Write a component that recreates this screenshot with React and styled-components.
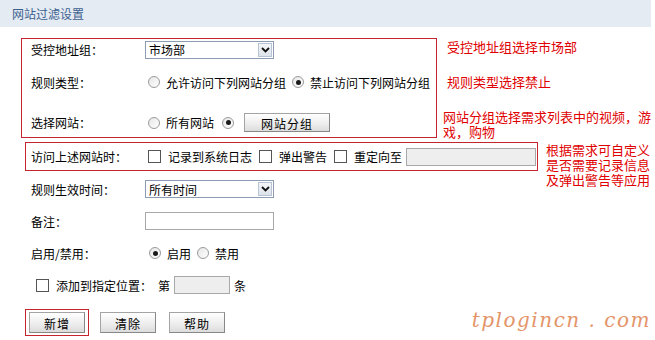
import React from 'react';
import styled, { createGlobalStyle } from 'styled-components';

const Global = createGlobalStyle`
  html, body { margin: 0; padding: 0; background: #fff; }
  body {
    font-family: "Noto Sans CJK SC", "Noto Sans", sans-serif;
    font-size: 12px;
    color: #000;
  }
`;

const Page = styled.div`
  position: relative;
  width: 655px;
  height: 340px;
  overflow: hidden;
`;

const Header = styled.div`
  width: 639px;
  height: 27px;
  padding-left: 12px;
  background: #e4ebf3;
  line-height: 27px;
  font-size: 12px;
  color: #3d5f8f;
`;

const Content = styled.div`
  padding: 11px 0 0 21px;
`;

const Section = styled.div`
  display: flex;
  align-items: flex-start;
  height: ${p => p.$h}px;
  margin-top: ${p => p.$mt || 0}px;
`;

const RedBox = styled.div`
  box-sizing: border-box;
  border: 1px solid #c4262e;
  width: ${p => p.$w}px;
  height: ${p => p.$h}px;
  margin-left: ${p => p.$ml || 0}px;
  padding-left: ${p => p.$pl || 0}px;
  flex-shrink: 0;
`;

const Row = styled.div`
  display: flex;
  align-items: center;
  height: ${p => p.$h}px;
  padding-top: ${p => p.$pt || 0}px;
  box-sizing: border-box;
  padding-left: ${p => p.$pl || 0}px;
  margin-top: ${p => p.$mt || 0}px;
  white-space: nowrap;
`;

const Label = styled.div`
  width: ${p => p.$w || 114}px;
  flex-shrink: 0;
`;

const Controls = styled.div`
  display: flex;
  align-items: center;
`;

const Text = styled.span`
  margin-left: ${p => p.$ml || 0}px;
`;

const Radio = styled.span`
  box-sizing: border-box;
  width: 12px;
  height: 12px;
  border-radius: 50%;
  border: 1px solid #9a9a9a;
  background: linear-gradient(135deg, #e6e6e6, #fff);
  margin: 0 6px 0 ${p => p.$ml ?? 6}px;
  display: inline-flex;
  align-items: center;
  justify-content: center;
  flex-shrink: 0;
  &::after {
    content: "";
    display: ${p => (p.$on ? 'block' : 'none')};
    width: 5px;
    height: 5px;
    border-radius: 50%;
    background: #1a1a1a;
  }
`;

const Check = styled.span`
  box-sizing: border-box;
  width: 13px;
  height: 13px;
  border: 1px solid #555;
  background: #fff;
  margin: 0 7px 0 ${p => p.$ml ?? 7}px;
  flex-shrink: 0;
`;

const SelectBox = styled.div`
  box-sizing: border-box;
  width: 129px;
  height: 18px;
  border: 1px solid #8c9db3;
  display: flex;
  align-items: center;
  justify-content: space-between;
  padding: 0 1px 0 3px;
  background: #fff;
`;

const SelectArrow = styled.span`
  box-sizing: border-box;
  width: 14px;
  height: 14px;
  border: 1px solid #b8c4d4;
  background: linear-gradient(#f4f6f9, #dde3ea);
  display: flex;
  align-items: center;
  justify-content: center;
`;

const TextInput = styled.div`
  box-sizing: border-box;
  width: ${p => p.$w}px;
  height: 18px;
  margin-left: ${p => p.$ml || 0}px;
  margin-right: ${p => p.$mr || 0}px;
  border: 1px solid #a8a8a8;
  background: ${p => (p.$gray ? '#eeeeee' : '#fff')};
`;

const Button = styled.div`
  box-sizing: border-box;
  width: ${p => p.$w || 56}px;
  height: ${p => p.$h || 21}px;
  margin-left: ${p => p.$ml || 0}px;
  border: 1px solid #a4a4a4;
  border-right-color: #888;
  border-bottom-color: #888;
  background: linear-gradient(#ffffff, #ececec 60%, #dcdcdc);
  display: flex;
  align-items: center;
  justify-content: center;
  padding-top: 1px;
  font-size: 12px;
  color: #000;
  letter-spacing: 1px;
`;

const ButtonRow = styled.div`
  display: flex;
  align-items: center;
  margin-top: 8px;
  margin-left: 4px;
`;

const Highlight = styled.div`
  box-sizing: border-box;
  border: 1px solid #c4262e;
  padding: 2px 3px;
`;

const Notes = styled.div`
  display: flex;
  flex-direction: column;
  margin-left: ${p => p.$ml || 0}px;
  color: #e00000;
  font-size: 13px;
`;

const Note = styled.div`
  margin-top: ${p => p.$mt || 0}px;
  margin-left: ${p => p.$ml || 0}px;
  line-height: ${p => p.$lh || 16}px;
  width: ${p => p.$w || 220}px;
  white-space: ${p => (p.$wrap ? 'normal' : 'nowrap')};
`;

const Watermark = styled.div`
  position: absolute;
  right: 4px;
  bottom: 8px;
  font-family: "DejaVu Serif", "Liberation Serif", serif;
  font-style: italic;
  font-size: 20px;
  color: #e4956a;
  letter-spacing: 1.5px;
`;

function Select({ value }) {
  return (
    <SelectBox>
      <span>{value}</span>
      <SelectArrow>
        <svg width="9" height="6" viewBox="0 0 9 6">
          <polyline points="1,1 4.5,4.5 8,1" fill="none" stroke="#111" strokeWidth="1.8" />
        </svg>
      </SelectArrow>
    </SelectBox>
  );
}

export default function App() {
  return (
    <Page>
      <Global />
      <Header>网站过滤设置</Header>
      <Content>
        <Section $h={100}>
          <RedBox $w={416} $h={100} $pl={9}>
            <Row $h={21}>
              <Label>受控地址组：</Label>
              <Select value="市场部" />
            </Row>
            <Row $h={44}>
              <Label>规则类型：</Label>
              <Controls>
                <Radio $ml={3} />
                <Text>允许访问下列网站分组</Text>
                <Radio $on />
                <Text>禁止访问下列网站分组</Text>
              </Controls>
            </Row>
            <Row $h={33} $pt={4}>
              <Label>选择网站：</Label>
              <Controls>
                <Radio $ml={3} />
                <Text>所有网站</Text>
                <Radio $on $ml={8} />
                <Button $w={86} $h={19} $ml={4}>网站分组</Button>
              </Controls>
            </Row>
          </RedBox>
          <Notes $ml={10}>
            <Note $mt={1}>受控地址组选择市场部</Note>
            <Note $mt={19}>规则类型选择禁止</Note>
            <Note $mt={19} $ml={-4} $lh={15} $w={212} $wrap>网站分组选择需求列表中的视频，游戏，购物</Note>
          </Notes>
        </Section>

        <Section $h={29} $mt={4}>
          <RedBox $w={513} $h={29} $ml={4} $pl={5}>
            <Row $h={27}>
              <Label>访问上述网站时：</Label>
              <Controls>
                <Check $ml={3} />
                <Text>记录到系统日志</Text>
                <Check />
                <Text>弹出警告</Text>
                <Check />
                <Text>重定向至</Text>
                <TextInput $w={130} $ml={4} $gray />
              </Controls>
            </Row>
          </RedBox>
          <Notes $ml={8}>
            <Note $mt={0} $lh={15} $w={106} $wrap>根据需求可自定义是否需要记录信息及弹出警告等应用</Note>
          </Notes>
        </Section>

        <Row $h={32} $pl={10} $mt={2}>
          <Label>规则生效时间：</Label>
          <Select value="所有时间" />
        </Row>
        <Row $h={32} $pl={10}>
          <Label>备注：</Label>
          <TextInput $w={129} />
        </Row>
        <Row $h={32} $pl={10}>
          <Label>启用/禁用：</Label>
          <Controls>
            <Radio $on $ml={4} />
            <Text>启用</Text>
            <Radio />
            <Text>禁用</Text>
          </Controls>
        </Row>
        <Row $h={32} $pl={15}>
          <Check $ml={0} />
          <Text>添加到指定位置：</Text>
          <Text $ml={6}>第</Text>
          <TextInput $w={56} $ml={4} $mr={4} $gray />
          <Text>条</Text>
        </Row>

        <ButtonRow>
          <Highlight>
            <Button>新增</Button>
          </Highlight>
          <Button $ml={11}>清除</Button>
          <Button $ml={13}>帮助</Button>
        </ButtonRow>
      </Content>
      <Watermark>tplogincn . com</Watermark>
    </Page>
  );
}
